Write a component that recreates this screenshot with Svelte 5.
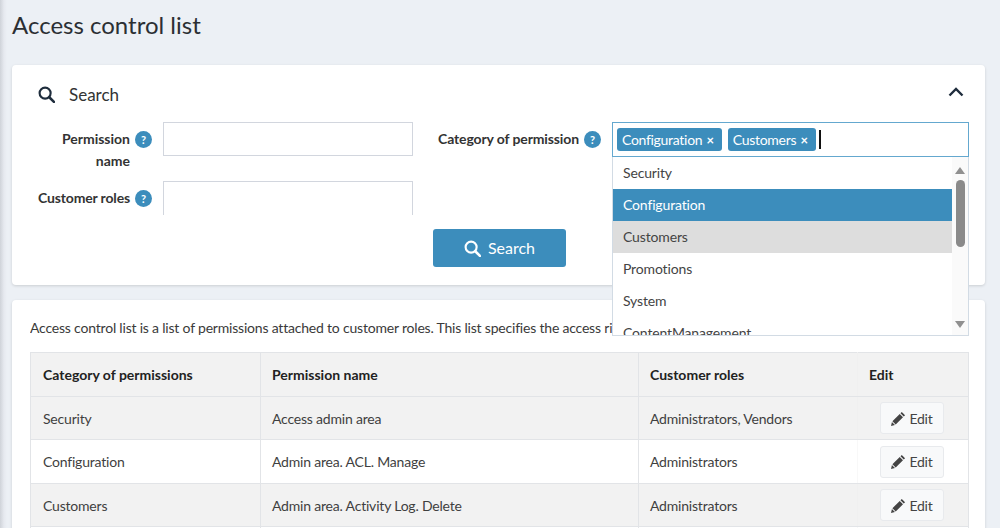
<script>
  const rows = [
    ["Security", "Access admin area", "Administrators, Vendors"],
    ["Configuration", "Admin area. ACL. Manage", "Administrators"],
    ["Customers", "Admin area. Activity Log. Delete", "Administrators"]
  ];
  const options = ["Security", "Configuration", "Customers", "Promotions", "System", "ContentManagement"];
</script>

<div class="page">
  <h1>Access control list</h1>

  <section class="card search-card">
    <div class="search-head">
      <svg class="head-icon" viewBox="0 0 16 16" width="17" height="17"><circle cx="6.7" cy="6.7" r="5.2" fill="none" stroke="#1f2d3d" stroke-width="2"/><path d="M10.6 10.6 15 15" stroke="#1f2d3d" stroke-width="2.4" stroke-linecap="round"/></svg>
      <span class="head-title">Search</span>
      <svg class="chevron" viewBox="0 0 16 10" width="16" height="10"><path d="M1.5 8.5 8 2l6.500 6.500" fill="none" stroke="#1f2d3d" stroke-width="2.400"/></svg>
    </div>

    <div class="form">
      <div class="col left">
        <div class="field first">
          <label class="lbl perm"><span>Permission<br/>name</span></label>
          <span class="help">?</span>
          <input class="input" type="text" />
        </div>
        <div class="field">
          <label class="lbl"><span>Customer roles</span></label>
          <span class="help">?</span>
          <div class="input clipped"></div>
        </div>
      </div>
      <div class="col right">
        <div class="field">
          <label class="lbl cat"><span>Category of permission</span></label>
          <span class="help">?</span>
          <div class="multi">
            <div class="box">
              <span class="tag">Configuration <b>×</b></span>
              <span class="tag">Customers <b>×</b></span>
              <span class="caret"></span>
            </div>
            <div class="dropdown">
              <ul>
                {#each options as o, i}
                  <li class:sel={i === 1} class:hov={i === 2}>{o}</li>
                {/each}
              </ul>
              <div class="sb">
                <svg viewBox="0 0 10 7" width="10" height="7"><path d="M5 0 10 7H0Z" fill="#909090"/></svg>
                <div class="thumb"></div>
                <svg class="down" viewBox="0 0 10 7" width="10" height="7"><path d="M0 0H10L5 7Z" fill="#909090"/></svg>
              </div>
            </div>
          </div>
        </div>
      </div>
    </div>

    <div class="actions">
      <button class="btn">
        <svg viewBox="0 0 16 16" width="17" height="17"><circle cx="6.7" cy="6.7" r="5.2" fill="none" stroke="#fff" stroke-width="2"/><path d="M10.600 10.600 15 15" stroke="#fff" stroke-width="2.400" stroke-linecap="round"/></svg>
        <span class="btn-text">Search</span>
      </button>
    </div>
  </section>

  <section class="card list-card">
    <p class="intro">Access control list is a list of permissions attached to customer roles. This list specifies the access rights of users to objects.</p>
    <table>
      <colgroup><col class="c1"/><col class="c2"/><col class="c3"/><col class="c4"/></colgroup>
      <thead>
        <tr><th>Category of permissions</th><th>Permission name</th><th>Customer roles</th><th>Edit</th></tr>
      </thead>
      <tbody>
        {#each rows as r}
          <tr>
            <td>{r[0]}</td><td>{r[1]}</td><td>{r[2]}</td>
            <td class="act">
              <span class="edit">
                <svg viewBox="0 0 16 16" width="15" height="15"><path d="M11.500 1 15 4.500 13.600 5.900 10.100 2.400ZM9.300 3.200 12.800 6.700 5 14.500 1.500 11ZM1 11.800 4.200 15 0 16Z" fill="#444"/></svg>
                Edit
              </span>
            </td>
          </tr>
        {/each}
        <tr><td></td><td></td><td></td><td></td></tr>
      </tbody>
    </table>
  </section>
</div>

<style>
  :global(body) {
    margin: 0;
    background: #ecf0f5;
    font-family: "Lato", "Noto Sans", sans-serif;
    color: #333;
    overflow: hidden;
  }
  .page {
    box-sizing: border-box;
    height: 528px;
    overflow: hidden;
    padding: 0 15px 0 12px;
    background: linear-gradient(90deg, #cfd3d9 0, #e6e9ef 4px, #ecf0f5 7px);
  }
  h1 {
    margin: 0;
    padding-top: 10px;
    height: 65px;
    box-sizing: border-box;
    font-size: 24px;
    font-weight: 400;
    line-height: 30px;
    color: #2b2f33;
  }
  .card {
    background: #fff;
    border-radius: 4px;
    box-shadow: 0 1px 3px rgba(0, 0, 0, .14);
  }
  .search-card {
    height: 220px;
    box-sizing: border-box;
    padding: 0 17px 0 26px;
    margin-bottom: 15px;
  }
  .search-head {
    display: flex;
    align-items: center;
    height: 57px;
    padding-top: 1px;
    box-sizing: border-box;
  }
  .head-icon { flex: none; }
  .head-title { margin-left: 14px; font-size: 17px; color: #333; }
  .chevron { margin-left: auto; margin-top: -4px; margin-right: 4px; }
  .form { display: flex; }
  .col.left { width: 375px; flex: none; }
  .col.right { margin-left: 25px; flex: 1; }
  .field { display: flex; align-items: flex-start; }
  .field.first { height: 59px; }
  .lbl {
    width: 92px;
    margin-right: 5px;
    text-align: right;
    font-weight: 700;
    font-size: 14px;
    line-height: 22px;
    padding-top: 6px;
    color: #333;
    white-space: nowrap;
    letter-spacing: -.15px;
  }
  .lbl.perm { letter-spacing: 0; }
  .lbl.cat { width: 141px; letter-spacing: -.12px; }
  .help {
    flex: none;
    width: 17px;
    height: 17px;
    margin-top: 9px;
    border-radius: 50%;
    background: #3c8dbc;
    color: #fff;
    font-size: 11px;
    font-weight: 700;
    line-height: 17px;
    text-align: center;
  }
  .input {
    box-sizing: border-box;
    display: block;
    width: 250px;
    height: 34px;
    margin-left: 11px;
    padding: 0;
    border: 1px solid #d2d6de;
    background: #fff;
    outline: none;
  }
  .input.clipped { border-bottom: 0; }
  .multi { position: relative; flex: none; width: 357px; margin-left: 11px; }
  .box {
    box-sizing: border-box;
    height: 35px;
    border: 1px solid #64a8cf;
    display: flex;
    align-items: center;
    gap: 6px;
    padding-left: 4px;
    background: #fff;
  }
  .tag {
    display: inline-block;
    background: #3c8dbc;
    color: #fff;
    border-radius: 3px;
    font-size: 14px;
    line-height: 23px;
    height: 23px;
    padding: 0 8px 0 5px;
    white-space: nowrap;
    letter-spacing: -.3px;
  }
  .tag b { font-size: 13px; margin-left: 1px; }
  .caret { width: 2px; height: 19px; background: #111; margin-left: -3px; }
  .dropdown {
    position: absolute;
    left: 0;
    right: 0;
    top: 35px;
    height: 179px;
    box-sizing: border-box;
    border: 1px solid #d2dbe4;
    border-top: 0;
    background: #fff;
    overflow: hidden;
    z-index: 5;
    display: flex;
  }
  .dropdown ul {
    list-style: none;
    margin: 0;
    padding: 0;
    flex: 1;
  }
  .dropdown li {
    height: 32px;
    line-height: 32px;
    padding-left: 10px;
    font-size: 14px;
    color: #444;
    letter-spacing: -.15px;
  }
  .dropdown li.sel { background: #3c8dbc; color: #fff; }
  .dropdown li.hov { background: #dddddd; }
  .sb {
    flex: none;
    width: 16px;
    background: #fafafa;
    position: relative;
    display: flex;
    flex-direction: column;
    align-items: center;
    padding-top: 10px;
  }
  .thumb {
    width: 9px;
    height: 67px;
    margin-top: 6px;
    border-radius: 5px;
    background: #8a8a8a;
  }
  .sb .down { position: absolute; bottom: 7px; left: 3px; }
  .actions { display: flex; padding-left: 395px; margin-top: 14px; }
  .btn {
    width: 133px;
    height: 38px;
    border: 0;
    border-radius: 3px;
    background: #3c8dbc;
    color: #fff;
    font-family: inherit;
    font-size: 16px;
    display: flex;
    align-items: center;
    justify-content: center;
    gap: 7px;
  }
  .btn-text { margin-top: -2px; }
  .list-card {
    height: 260px;
    padding: 0 17px 0 18px;
  }
  .intro {
    margin: 0;
    padding-top: 18px;
    height: 52px;
    box-sizing: border-box;
    font-size: 14px;
    line-height: 20px;
    color: #3a3a3a;
    white-space: nowrap;
    overflow: hidden;
    letter-spacing: -.2px;
  }
  table {
    width: 938px;
    table-layout: fixed;
    border-collapse: collapse;
    font-size: 14px;
  }
  .c1 { width: 230px; }
  .c2 { width: 378px; }
  .c3 { width: 219px; }
  .c4 { width: 111px; }
  th, td {
    border: 1px solid #e2e4e7;
    padding: 0 11px;
    text-align: left;
    height: 43px;
    box-sizing: border-box;
    color: #3f3f3f;
  }
  td { letter-spacing: -.2px; }
  th:first-child, td:first-child { padding-left: 12px; }
  th { background: #f2f2f2; font-weight: 700; color: #222; height: 44px; }
  tbody tr:nth-child(odd) { background: #f2f2f2; }
  tbody tr:nth-child(even) { background: #fff; }
  tbody tr:nth-child(2) td { height: 44px; }
  th:nth-child(3), td:nth-child(3) { border-right-color: #f0f0f0; }
  th:last-child, td:last-child { border-left-color: #f0f0f0; }
  tbody tr:nth-child(even) td:nth-child(3) { border-right-color: #f8f8f8; }
  tbody tr:nth-child(even) td:last-child { border-left-color: #f8f8f8; }
  .act { padding: 0; }
  .edit {
    box-sizing: border-box;
    margin-left: 22px;
    width: 64px;
    height: 32px;
    display: flex;
    align-items: center;
    justify-content: center;
    gap: 3px;
    background: #f8f9fa;
    border: 1px solid #e8eaed;
    border-radius: 3px;
    color: #444;
  }
</style>
